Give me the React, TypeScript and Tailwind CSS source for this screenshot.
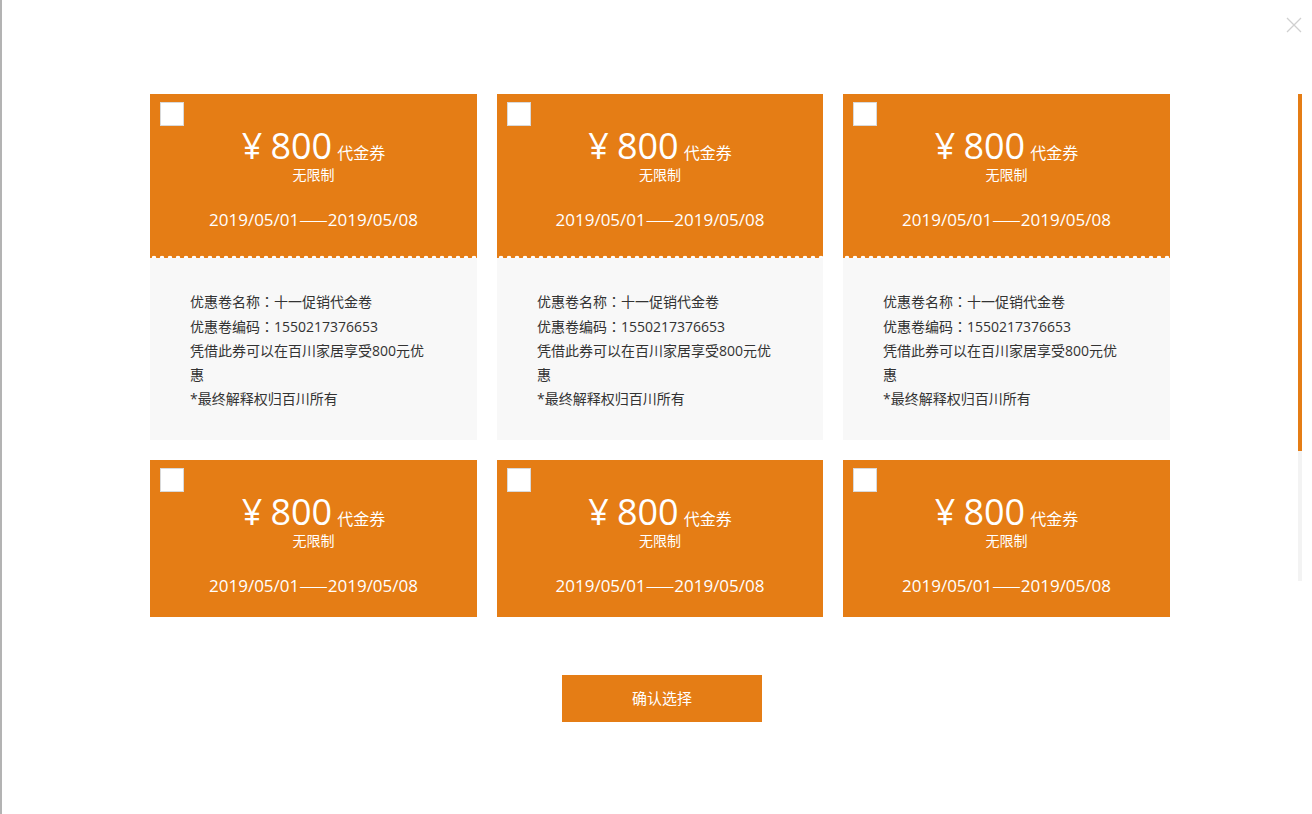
import React from "react";

const ORANGE = "bg-[#e57d15]";

function Checkbox() {
  return <div className="w-6 h-6 bg-white border border-[#d9d9d9]" />;
}

function Colon() {
  return <span style={{ fontFamily: '"Noto Sans CJK TC", sans-serif' }}>：</span>;
}

function CouponHead({ expanded }: { expanded: boolean }) {
  return (
    <div className={`relative ${ORANGE} text-white ${expanded ? "h-[164px]" : "h-[157px]"}`}>
      <div className="absolute left-[10px] top-2">
        <Checkbox />
      </div>
      <div className="flex flex-col items-center pt-[32px]">
        <div className="flex items-end h-[40px]">
          <span className="text-[36px] leading-[40px]">¥</span>
          <span className="text-[36px] leading-[40px] ml-[8px]">800</span>
          <span className="text-[16px] leading-[20px] ml-[5px] mb-[3px]">代金券</span>
        </div>
        <div className="text-[14px] leading-[18px]">无限制</div>
        <div className="text-[17px] leading-[24px] mt-[23px]">
          2019/05/01
          <span style={{ fontFamily: '"Noto Sans CJK SC", sans-serif' }}>——</span>
          2019/05/08
        </div>
      </div>
      {expanded && (
        <div className="absolute left-0 right-0 bottom-0 h-[4px] bg-[radial-gradient(circle_at_50%_100%,#ffffff_2px,transparent_2.6px)] bg-[length:8px_4px]" />
      )}
    </div>
  );
}

function Coupon({ expanded }: { expanded: boolean }) {
  return (
    <div className="flex flex-col">
      <CouponHead expanded={expanded} />
      {expanded && (
        <div className="bg-[#f8f8f8] h-[182px] pl-[40px] pr-[40px] pt-[31px] text-[14px] leading-[24px] text-[#333333]">
          <div>优惠卷名称<Colon />十一促销代金卷</div>
          <div>优惠卷编码<Colon />1550217376653</div>
          <div>凭借此券可以在百川家居享受800元优惠</div>
          <div>*最终解释权归百川所有</div>
        </div>
      )}
    </div>
  );
}

export default function App() {
  return (
    <div
      className="relative w-[1312px] h-[814px] bg-white border-l-2 border-[#b3b3b3] overflow-hidden"
      style={{ fontFamily: '"Open Sans", "Noto Sans CJK SC", sans-serif' }}
    >
      <div className="absolute right-[10px] top-[17px]">
        <svg width="16" height="16" viewBox="0 0 16 16">
          <path d="M1 1 L15 15 M15 1 L1 15" stroke="#d0d0d0" strokeWidth="1.3" fill="none" />
        </svg>
      </div>
      <div className="absolute left-[1296px] top-[94px] w-[4px] h-[487px] bg-[#f3f3f3]">
        <div className="w-[4px] h-[357px] bg-[#e57d15]" />
      </div>
      <div className="pl-[148px] pt-[94px] w-[1170px]">
        <div className="grid grid-cols-[327px_326px_327px] gap-x-[20px] gap-y-[20px] items-start">
          <Coupon expanded />
          <Coupon expanded />
          <Coupon expanded />
          <Coupon expanded={false} />
          <Coupon expanded={false} />
          <Coupon expanded={false} />
        </div>
        <div className="flex justify-center pl-[2px] mt-[58px]">
          <button className={`w-[200px] h-[47px] ${ORANGE} text-white text-[15px]`}>确认选择</button>
        </div>
      </div>
    </div>
  );
}
